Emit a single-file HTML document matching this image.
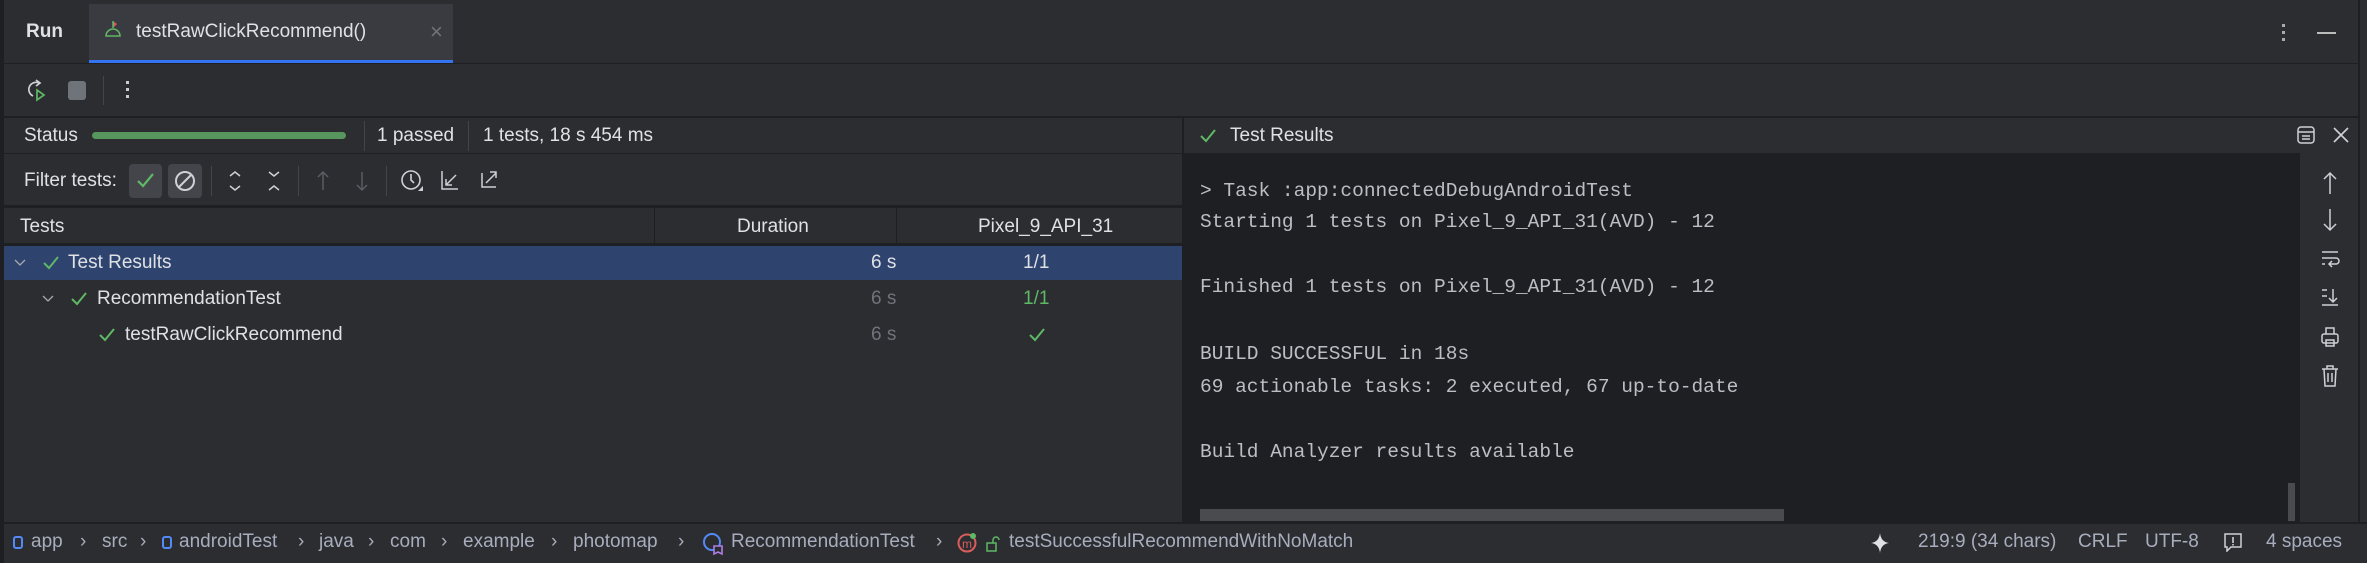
<!DOCTYPE html>
<html><head><meta charset="utf-8"><style>
*{margin:0;padding:0;box-sizing:border-box}
body{width:2367px;height:563px;background:#2b2d30;font-family:"Liberation Sans",sans-serif;color:#dfe1e5;font-size:19px;position:relative;overflow:hidden}
.a{position:absolute;white-space:nowrap}
.h{position:absolute;height:2px;background:#1e1f22}
.v{position:absolute;width:2px;background:#43454a}
.mono{font-family:"Liberation Mono",monospace;font-size:19.5px;color:#bcbec4}
.sb{color:#a8adbd;font-size:19px;top:531px}
.ic{display:inline-block;width:10px;height:13px;border:2px solid #548af7;border-radius:3px}
</style></head><body>
<div class="a" style="left:0;top:0;width:4px;height:563px;background:#1e1f22"></div>
<div class="a" style="left:26px;top:21px;font-weight:bold;font-size:19px">Run</div>
<div class="a" style="left:89px;top:4px;width:364px;height:59px;background:#393b40"></div>
<div class="a" style="left:89px;top:60px;width:364px;height:3px;background:#3574f0"></div>
<svg class="a" style="left:104px;top:20px" width="18" height="18" viewBox="0 0 18 18"><path d="M2 16a7 7 0 0 1 14 0z" fill="none" stroke="#5fb865" stroke-width="1.5"/><path d="M9 1l4 3-4 4z" fill="#db5c5c"/><path d="M9 1v7" stroke="#5fb865" stroke-width="1.5"/></svg>
<div class="a" style="left:136px;top:21px">testRawClickRecommend()</div>
<div class="a" style="left:430px;top:19px;color:#6f737a;font-size:22px">×</div>
<div class="a" style="left:2282px;top:24px;width:3px;height:3px;background:#aaa;box-shadow:0 7px 0 #aaa,0 14px 0 #aaa"></div>
<div class="a" style="left:2317px;top:32px;width:19px;height:2px;background:#bbb"></div>
<div class="h" style="left:0;top:63px;width:2367px;height:1px"></div>
<svg class="a" style="left:26px;top:78px" width="22" height="24" viewBox="0 0 22 24"><path d="M13 5a7 7 0 1 0 -6 13" fill="none" stroke="#ced0d6" stroke-width="1.7"/><path d="M10 2l4 3-4 3" fill="none" stroke="#ced0d6" stroke-width="1.7"/><path d="M11 12v10l7-5z" fill="none" stroke="#5fb865" stroke-width="1.7"/></svg>
<div class="a" style="left:68px;top:81px;width:18px;height:19px;border-radius:3px;background:#6f737a"></div>
<div class="v" style="left:103px;top:76px;height:29px;width:1px"></div>
<div class="a" style="left:126px;top:81px;width:3px;height:3px;background:#ccc;box-shadow:0 7px 0 #ccc,0 14px 0 #ccc"></div>
<div class="h" style="left:0;top:116px;width:2367px"></div>
<div class="a" style="left:24px;top:125px">Status</div>
<div class="a" style="left:92px;top:132px;width:254px;height:7px;border-radius:4px;background:#57965c"></div>
<div class="v" style="left:364px;top:121px;height:30px;width:1px"></div>
<div class="a" style="left:377px;top:125px">1 passed</div>
<div class="v" style="left:468px;top:121px;height:30px;width:1px"></div>
<div class="a" style="left:483px;top:125px">1 tests, 18 s 454 ms</div>
<div class="h" style="left:0;top:153px;width:1183px;height:1px"></div>
<div class="a" style="left:24px;top:170px">Filter tests:</div>
<div class="a" style="left:129px;top:164px;width:33px;height:34px;border-radius:4px;background:#43454a"></div>
<svg class="a" style="left:136px;top:172px" width="20" height="18"><path d="M2 9l5 5 10-12" fill="none" stroke="#5fb865" stroke-width="2.2"/></svg>
<div class="a" style="left:168px;top:164px;width:34px;height:34px;border-radius:4px;background:#43454a"></div>
<svg class="a" style="left:174px;top:170px" width="22" height="22"><circle cx="11" cy="11" r="9" fill="none" stroke="#ced0d6" stroke-width="2"/><path d="M4.5 17.5L17.5 4.5" stroke="#ced0d6" stroke-width="2"/></svg>
<div class="v" style="left:211px;top:166px;height:30px;width:1px"></div>
<svg class="a" style="left:227px;top:170px" width="16" height="22"><path d="M3 6l5-4 5 4M3 16l5 4 5-4" fill="none" stroke="#ced0d6" stroke-width="1.5"/></svg>
<svg class="a" style="left:266px;top:170px" width="16" height="22"><path d="M3 2l5 4 5-4M3 20l5-4 5 4" fill="none" stroke="#ced0d6" stroke-width="1.5"/></svg>
<div class="v" style="left:298px;top:166px;height:30px;width:1px"></div>
<svg class="a" style="left:315px;top:170px" width="16" height="22"><path d="M8 20V2M3 7l5-5 5 5" fill="none" stroke="#5a5d63" stroke-width="1.5"/></svg>
<svg class="a" style="left:354px;top:170px" width="16" height="22"><path d="M8 2v18M3 15l5 5 5-5" fill="none" stroke="#5a5d63" stroke-width="1.5"/></svg>
<div class="v" style="left:386px;top:166px;height:30px;width:1px"></div>
<svg class="a" style="left:400px;top:167px" width="24" height="28"><circle cx="11" cy="13" r="9" fill="none" stroke="#ced0d6" stroke-width="1.6"/><path d="M11 7v6l3 3" fill="none" stroke="#ced0d6" stroke-width="1.6"/><path d="M18 24h5v-5z" fill="#ced0d6"/></svg>
<svg class="a" style="left:440px;top:169px" width="20" height="22"><path d="M2 2v18h16M6 16L16 6M6 10v6h6" fill="none" stroke="#ced0d6" stroke-width="1.5"/></svg>
<svg class="a" style="left:480px;top:167px" width="20" height="22"><path d="M2 6v14h14M6 16L16 6M10 5h6v6" fill="none" stroke="#ced0d6" stroke-width="1.5"/></svg>
<div class="h" style="left:0;top:205px;width:1183px;height:3px"></div>
<div class="a" style="left:20px;top:216px">Tests</div>
<div class="v" style="left:654px;top:208px;height:36px;width:1px;background:#1e1f22"></div>
<div class="a" style="left:737px;top:216px">Duration</div>
<div class="v" style="left:896px;top:208px;height:36px;width:1px;background:#1e1f22"></div>
<div class="a" style="left:978px;top:216px">Pixel_9_API_31</div>
<div class="h" style="left:0;top:243px;width:1183px;height:3px"></div>
<div class="a" style="left:4px;top:246px;width:1179px;height:34px;background:#2e436e"></div>
<svg class="a" style="left:14px;top:258px" width="12" height="10"><path d="M1 2l5 5 5-5" fill="none" stroke="#aaa" stroke-width="1.3"/></svg>
<svg class="a" style="left:42px;top:254px" width="18" height="18"><path d="M2 9l5 5 9-11" fill="none" stroke="#5fb865" stroke-width="2"/></svg>
<div class="a" style="left:68px;top:252px">Test Results</div>
<div class="a" style="left:871px;top:252px">6 s</div>
<div class="a" style="left:1023px;top:252px">1/1</div>
<svg class="a" style="left:42px;top:294px" width="12" height="10"><path d="M1 2l5 5 5-5" fill="none" stroke="#aaa" stroke-width="1.3"/></svg>
<svg class="a" style="left:70px;top:290px" width="18" height="18"><path d="M2 9l5 5 9-11" fill="none" stroke="#5fb865" stroke-width="2"/></svg>
<div class="a" style="left:97px;top:288px">RecommendationTest</div>
<div class="a" style="left:871px;top:288px;color:#6f737a">6 s</div>
<div class="a" style="left:1023px;top:288px;color:#5fb865">1/1</div>
<svg class="a" style="left:98px;top:326px" width="18" height="18"><path d="M2 9l5 5 9-11" fill="none" stroke="#5fb865" stroke-width="2"/></svg>
<div class="a" style="left:125px;top:324px">testRawClickRecommend</div>
<div class="a" style="left:871px;top:324px;color:#6f737a">6 s</div>
<svg class="a" style="left:1028px;top:326px" width="18" height="18"><path d="M2 9l5 5 9-11" fill="none" stroke="#5fb865" stroke-width="2"/></svg>
<div class="a" style="left:1182px;top:117px;width:2px;height:406px;background:#1e1f22"></div>
<svg class="a" style="left:1199px;top:127px" width="18" height="18"><path d="M2 9l5 5 9-11" fill="none" stroke="#5fb865" stroke-width="2"/></svg>
<div class="a" style="left:1230px;top:125px">Test Results</div>
<svg class="a" style="left:2296px;top:125px" width="20" height="20"><rect x="2" y="2" width="16" height="16" rx="3" fill="none" stroke="#ced0d6" stroke-width="1.5"/><path d="M2 7h16M6 11h8M6 14h8" stroke="#ced0d6" stroke-width="1.4"/></svg>
<svg class="a" style="left:2332px;top:126px" width="18" height="18"><path d="M2 2l14 14M16 2L2 16" stroke="#ced0d6" stroke-width="1.6"/></svg>
<div class="a" style="left:1184px;top:153px;width:1174px;height:370px;background:#1e1f22"></div>
<div class="a" style="left:2300px;top:153px;width:58px;height:370px;background:#2b2d30"></div>
<div class="a" style="left:2358px;top:0;width:9px;height:523px;background:#2b2d30;border-left:2px solid #1e1f22"></div>
<div class="a mono" style="left:1200px;top:180px">&gt; Task :app:connectedDebugAndroidTest</div>
<div class="a mono" style="left:1200px;top:211px">Starting 1 tests on Pixel_9_API_31(AVD) - 12</div>
<div class="a mono" style="left:1200px;top:276px">Finished 1 tests on Pixel_9_API_31(AVD) - 12</div>
<div class="a mono" style="left:1200px;top:343px">BUILD SUCCESSFUL in 18s</div>
<div class="a mono" style="left:1200px;top:376px">69 actionable tasks: 2 executed, 67 up-to-date</div>
<div class="a mono" style="left:1200px;top:441px">Build Analyzer results available</div>
<div class="a" style="left:1200px;top:509px;width:584px;height:12px;background:#4a4b4f"></div>
<div class="a" style="left:2288px;top:483px;width:7px;height:38px;background:#4a4b4f"></div>
<svg class="a" style="left:2320px;top:170px" width="20" height="26"><path d="M10 24V3M4 9l6-6 6 6" fill="none" stroke="#ced0d6" stroke-width="1.5"/></svg>
<svg class="a" style="left:2320px;top:207px" width="20" height="26"><path d="M10 2v21M4 17l6 6 6-6" fill="none" stroke="#ced0d6" stroke-width="1.5"/></svg>
<svg class="a" style="left:2320px;top:250px" width="20" height="20"><path d="M2 2h16M2 8h14a3 3 0 0 1 0 6H9M12 11l-3 3 3 3M2 14h3" fill="none" stroke="#ced0d6" stroke-width="1.5"/></svg>
<svg class="a" style="left:2320px;top:287px" width="20" height="20"><path d="M2 3h5M2 9h5M13 2v13M9 11l4 4 4-4M2 18h16" fill="none" stroke="#ced0d6" stroke-width="1.5"/></svg>
<svg class="a" style="left:2320px;top:326px" width="20" height="22"><rect x="2" y="8" width="16" height="9" rx="2" fill="none" stroke="#ced0d6" stroke-width="1.5"/><path d="M6 8V2h8v6M6 14h8v6H6z" fill="none" stroke="#ced0d6" stroke-width="1.5"/></svg>
<svg class="a" style="left:2320px;top:364px" width="20" height="24"><path d="M2 5h16M7 5V2h6v3M4 5l1 17h10l1-17M8 9v9M12 9v9" fill="none" stroke="#ced0d6" stroke-width="1.5"/></svg>
<div class="h" style="left:0;top:522px;width:2367px;height:2px"></div>
<div class="a ic" style="left:13px;top:536px"></div>
<div class="a sb" style="left:31px">app</div>
<div class="a sb" style="left:80px">›</div>
<div class="a sb" style="left:102px">src</div>
<div class="a sb" style="left:140px">›</div>
<div class="a ic" style="left:162px;top:536px"></div>
<div class="a sb" style="left:179px">androidTest</div>
<div class="a sb" style="left:298px">›</div>
<div class="a sb" style="left:319px">java</div>
<div class="a sb" style="left:368px">›</div>
<div class="a sb" style="left:390px">com</div>
<div class="a sb" style="left:441px">›</div>
<div class="a sb" style="left:463px">example</div>
<div class="a sb" style="left:551px">›</div>
<div class="a sb" style="left:573px">photomap</div>
<div class="a sb" style="left:678px">›</div>
<svg class="a" style="left:702px;top:532px" width="22" height="24"><circle cx="10" cy="10" r="8" fill="none" stroke="#548af7" stroke-width="2"/><path d="M12 14h8v8l-4-2-4 2z" fill="#2b2d30" stroke="#b07de8" stroke-width="1.6"/></svg>
<div class="a sb" style="left:731px">RecommendationTest</div>
<div class="a sb" style="left:936px">›</div>
<svg class="a" style="left:957px;top:532px" width="22" height="22"><circle cx="10" cy="11" r="8.5" fill="none" stroke="#db5c5c" stroke-width="2"/><text x="5" y="16" font-size="12" fill="#db5c5c" font-family="Liberation Sans">m</text><circle cx="16" cy="4" r="3" fill="#5fb865"/></svg>
<svg class="a" style="left:986px;top:536px" width="14" height="16"><rect x="1" y="7" width="9" height="8" fill="none" stroke="#5fb865" stroke-width="1.5"/><path d="M7 7V4a3 3 0 0 1 6 0" fill="none" stroke="#5fb865" stroke-width="1.5"/></svg>
<div class="a sb" style="left:1009px">testSuccessfulRecommendWithNoMatch</div>
<svg class="a" style="left:1871px;top:533px" width="18" height="20"><path d="M9 0Q10 9 18 10Q10 11 9 20Q8 11 0 10Q8 9 9 0z" fill="#dfe1e5"/></svg>
<div class="a sb" style="left:1918px">219:9 (34 chars)</div>
<div class="a sb" style="left:2078px">CRLF</div>
<div class="a sb" style="left:2145px">UTF-8</div>
<svg class="a" style="left:2223px;top:532px" width="20" height="20"><path d="M2 2h16v13H8l-4 4v-4H2z" fill="none" stroke="#ced0d6" stroke-width="1.5"/><path d="M10 5v6M10 12v1.5" stroke="#ced0d6" stroke-width="1.6"/></svg>
<div class="a sb" style="left:2266px">4 spaces</div>
</body></html>
